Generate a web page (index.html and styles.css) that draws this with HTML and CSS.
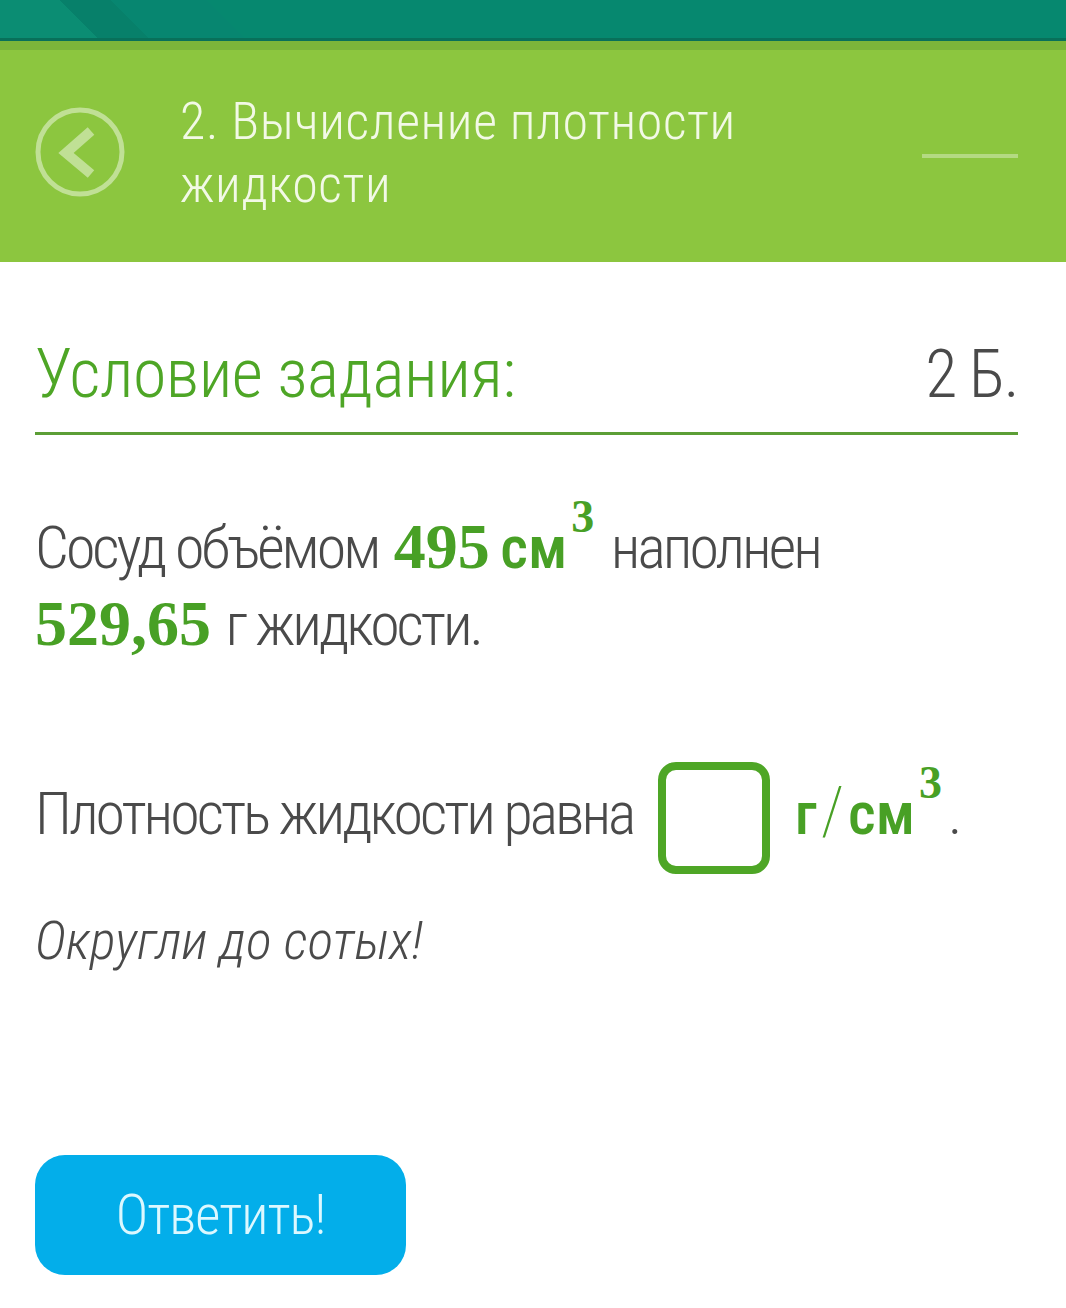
FILE: index.html
```html
<!DOCTYPE html>
<html lang="ru">
<head>
    <meta charset="UTF-8">
    <meta name="viewport" content="width=device-width, initial-scale=1.0">
    <title>Вычисление плотности жидкости</title>
    <link rel="stylesheet" href="styles.css">
</head>
<body>

<div class="topbar"></div>

<header class="header">
    <a class="back" href="#">
        <svg width="90" height="90" viewBox="0 0 90 90">
            <circle cx="45" cy="45" r="42" fill="none" stroke="rgba(255,255,255,0.45)" stroke-width="5"/>
            <polyline points="56,24 31,46 56,67" fill="none" stroke="rgba(255,255,255,0.45)" stroke-width="10"/>
        </svg>
    </a>
    <h1 class="title">2. Вычисление плотности жидкости</h1>
    <span class="menu-dash"></span>
</header>

<main class="content">
    <div class="task-head">
        <h2>Условие задания:</h2>
        <span class="points">2 Б.</span>
    </div>

    <p class="text">
        Сосуд объёмом <span class="num">495</span> <span class="unit">см</span><sup class="num">3</sup> наполнен<br>
        <span class="num first">529,65</span> г жидкости.
    </p>

    <p class="text answer-line">
        Плотность жидкости равна <input class="answer" type="text"><span class="unit">г<span class="slash">/</span>см</span><sup class="num">3</sup>.
    </p>

    <p class="hint">Округли до сотых!</p>

    <button class="submit" type="button">Ответить!</button>
</main>

</body>
</html>
```

FILE: styles.css
```css
body {
    margin: 0;
    background-color: #fff;
    font-family: Roboto, "Noto Sans", sans-serif;
    font-stretch: 75%;
    font-weight: 300;
    color: #4a4a4a;
}

.topbar {
    height: 38px;
    background: linear-gradient(45deg, #0b8d73 0, #0b8d73 69px, #07806a 69px, #07806a 105px, #078670 105px, #078670 173px, #06886f 173px);
    border-bottom: 3px solid #08705a;
}

.header {
    display: flex;
    align-items: center;
    height: 212px;
    padding: 0 48px 0 35px;
    background-color: #8cc63f;
    border-top: 9px solid #7cb53a;
}

.back {
    display: block;
    width: 90px;
    height: 90px;
    margin-right: 55px;
    margin-top: -8px;
}

.title {
    flex: 1;
    margin: -6px 0 0;
    max-width: 600px;
    font-size: 52px;
    font-weight: 300;
    line-height: 63px;
    letter-spacing: 0.6px;
    color: #f2f9e6;
}

.menu-dash {
    width: 96px;
    height: 4px;
    margin-left: auto;
    background-color: rgba(255, 255, 255, 0.35);
}

.content {
    padding: 72px 48px 40px 35px;
}

.task-head {
    display: flex;
    justify-content: space-between;
    align-items: baseline;
    padding-bottom: 18px;
    border-bottom: 3px solid #5c9e36;
}

.task-head h2 {
    margin: 0;
    font-size: 68px;
    font-weight: 300;
    line-height: 80px;
    letter-spacing: -0.5px;
    color: #4ea626;
}

.points {
    font-size: 66px;
    letter-spacing: -1.5px;
    color: #4a4a4a;
}

.text {
    margin: 74px 0 0;
    font-size: 60px;
    line-height: 76px;
    letter-spacing: -3px;
}

.num {
    margin-left: 5px;
    font-family: "Liberation Serif", serif;
    font-weight: bold;
    font-size: 64px;
    letter-spacing: 0;
    color: #48a025;
}

.num.first {
    margin-left: 0;
    margin-right: 4px;
}

sup.num {
    margin: 0 6px 0 4px;
    font-size: 46px;
    line-height: 0;
    vertical-align: 36px;
}

.unit {
    font-weight: 500;
    letter-spacing: 0;
    color: #48a025;
}

.slash {
    font-weight: 200;
    font-size: 66px;
    padding: 0 4px;
}

.answer-line {
    margin-top: 99px;
}

.answer {
    box-sizing: border-box;
    width: 112px;
    height: 112px;
    margin: 0 25px 0 14px;
    vertical-align: middle;
    border: 8px solid #4ea626;
    border-radius: 18px;
    outline: none;
}

.hint {
    margin: 29px 0 0;
    font-style: italic;
    font-size: 54px;
    line-height: 76px;
}

.submit {
    display: block;
    width: 371px;
    height: 120px;
    margin-top: 176px;
    padding: 0;
    border: none;
    border-radius: 30px;
    background-color: #03aeea;
    font-family: Roboto, sans-serif;
    font-stretch: 75%;
    font-weight: 300;
    font-size: 55px;
    letter-spacing: -1px;
    color: #dcf8ff;
    cursor: pointer;
}
```
